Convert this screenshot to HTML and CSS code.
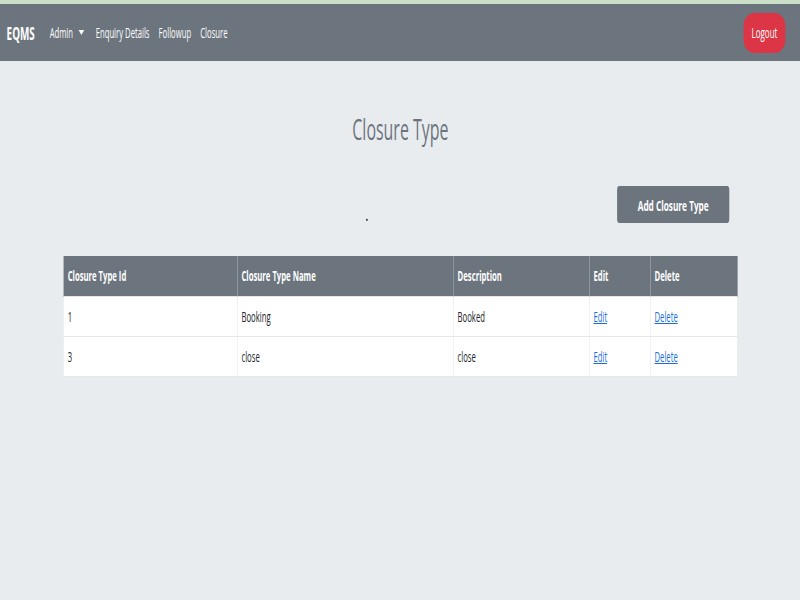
FILE: index.html
```html
<!DOCTYPE html>
<html>
<head>
<meta charset="utf-8">
<link rel="stylesheet" href="styles.css">
</head>
<body>
<div class="frame">
<div class="page">
  <div class="topline"></div>
  <nav class="navbar">
    <a class="brand">EQMS</a>
    <ul class="nav">
      <li class="dropdown">Admin <span class="caret"></span></li>
      <li>Enquiry Details</li>
      <li>Followup</li>
      <li>Closure</li>
    </ul>
    <button class="logout">Logout</button>
  </nav>
  <main class="content">
    <h1 class="title">Closure Type</h1>
    <div class="toolbar">
      <span class="dot">.</span>
      <button class="add">Add Closure Type</button>
    </div>
    <table class="grid">
      <thead>
        <tr><th class="c1">Closure Type Id</th><th class="c2">Closure Type Name</th><th class="c3">Description</th><th class="c4">Edit</th><th class="c5">Delete</th></tr>
      </thead>
      <tbody>
        <tr><td>1</td><td>Booking</td><td>Booked</td><td><a href="#">Edit</a></td><td><a href="#">Delete</a></td></tr>
        <tr><td>3</td><td>close</td><td>close</td><td><a href="#">Edit</a></td><td><a href="#">Delete</a></td></tr>
      </tbody>
    </table>
  </main>
</div>
</div>
</body>
</html>
```
FILE: styles.css
```css
* { box-sizing: border-box; }
html, body { margin: 0; padding: 0; overflow: hidden; }
body {
  background: #e9ecef;
  width: 800px;
  height: 600px;
}
.frame { width: 800px; height: 600px; overflow: hidden; }
/* the reference is a horizontally compressed capture: lay out at full width, then compress */
.page {
  width: 1455px;
  height: 600px;
  transform: scaleX(0.55);
  transform-origin: 0 0;
  font-family: "Open Sans", "Noto Sans", sans-serif;
  color: #212529;
}
.topline { height: 4px; background: #cbdec7; }
.navbar {
  height: 57px;
  background: #6c757d;
  display: flex;
  align-items: center;
  padding: 0 27px 0 12px;
}
.brand { color: #fff; font-weight: bold; font-size: 18px; margin-right: 27px; }
.nav { list-style: none; margin: 0; padding: 0; display: flex; gap: 16.5px; color: #fff; font-size: 14px; }
.nav .dropdown { margin-right: 4px; }
.caret {
  display: inline-block; width: 0; height: 0;
  border-left: 5px solid transparent; border-right: 5px solid transparent;
  border-top: 5px solid #fff; vertical-align: 3px; margin-left: 7px;
}
.logout {
  margin-left: auto;
  background: #dc3545;
  color: #fff;
  border: none;
  border-radius: 20px / 13px;
  width: 76px; height: 40px;
  font-family: inherit; font-size: 14.5px;
  padding: 0;
}
.content { padding: 0 114px 0 115px; }
.title {
  margin: 48px 0 0;
  text-align: center;
  color: #6c757d;
  font-weight: normal;
  font-size: 29px;
  line-height: 40px;
}
.toolbar {
  margin-top: 37px;
  display: flex;
  align-items: flex-end;
  height: 37px;
  padding-right: 15px;
}
.dot { margin-left: 550px; font-size: 14px; line-height: 14px; color: #000; font-weight: bold; }
.add {
  margin-left: auto;
  background: #6c757d;
  color: #fff;
  border: none;
  border-radius: 4px;
  width: 204px; height: 37px;
  font-family: inherit; font-weight: bold; font-size: 15px;
}
.grid {
  margin-top: 33px;
  width: 100%;
  border-collapse: collapse;
  background: #fff;
  font-size: 14px;
}
.grid th {
  background: #6c757d;
  color: #fff;
  text-align: left;
  height: 40px;
  padding: 0 7px;
  border: 1px solid #8f979e;
  border-top: 0; border-bottom: 0;
}
.grid td {
  height: 40px;
  padding: 0 7px;
  border: 1px solid #e4e6e8;
}
.c1 { width: 316px; } .c2 { width: 393px; } .c3 { width: 247px; } .c4 { width: 111px; }
.grid a { color: #1a6fd6; text-decoration: underline; }
```
